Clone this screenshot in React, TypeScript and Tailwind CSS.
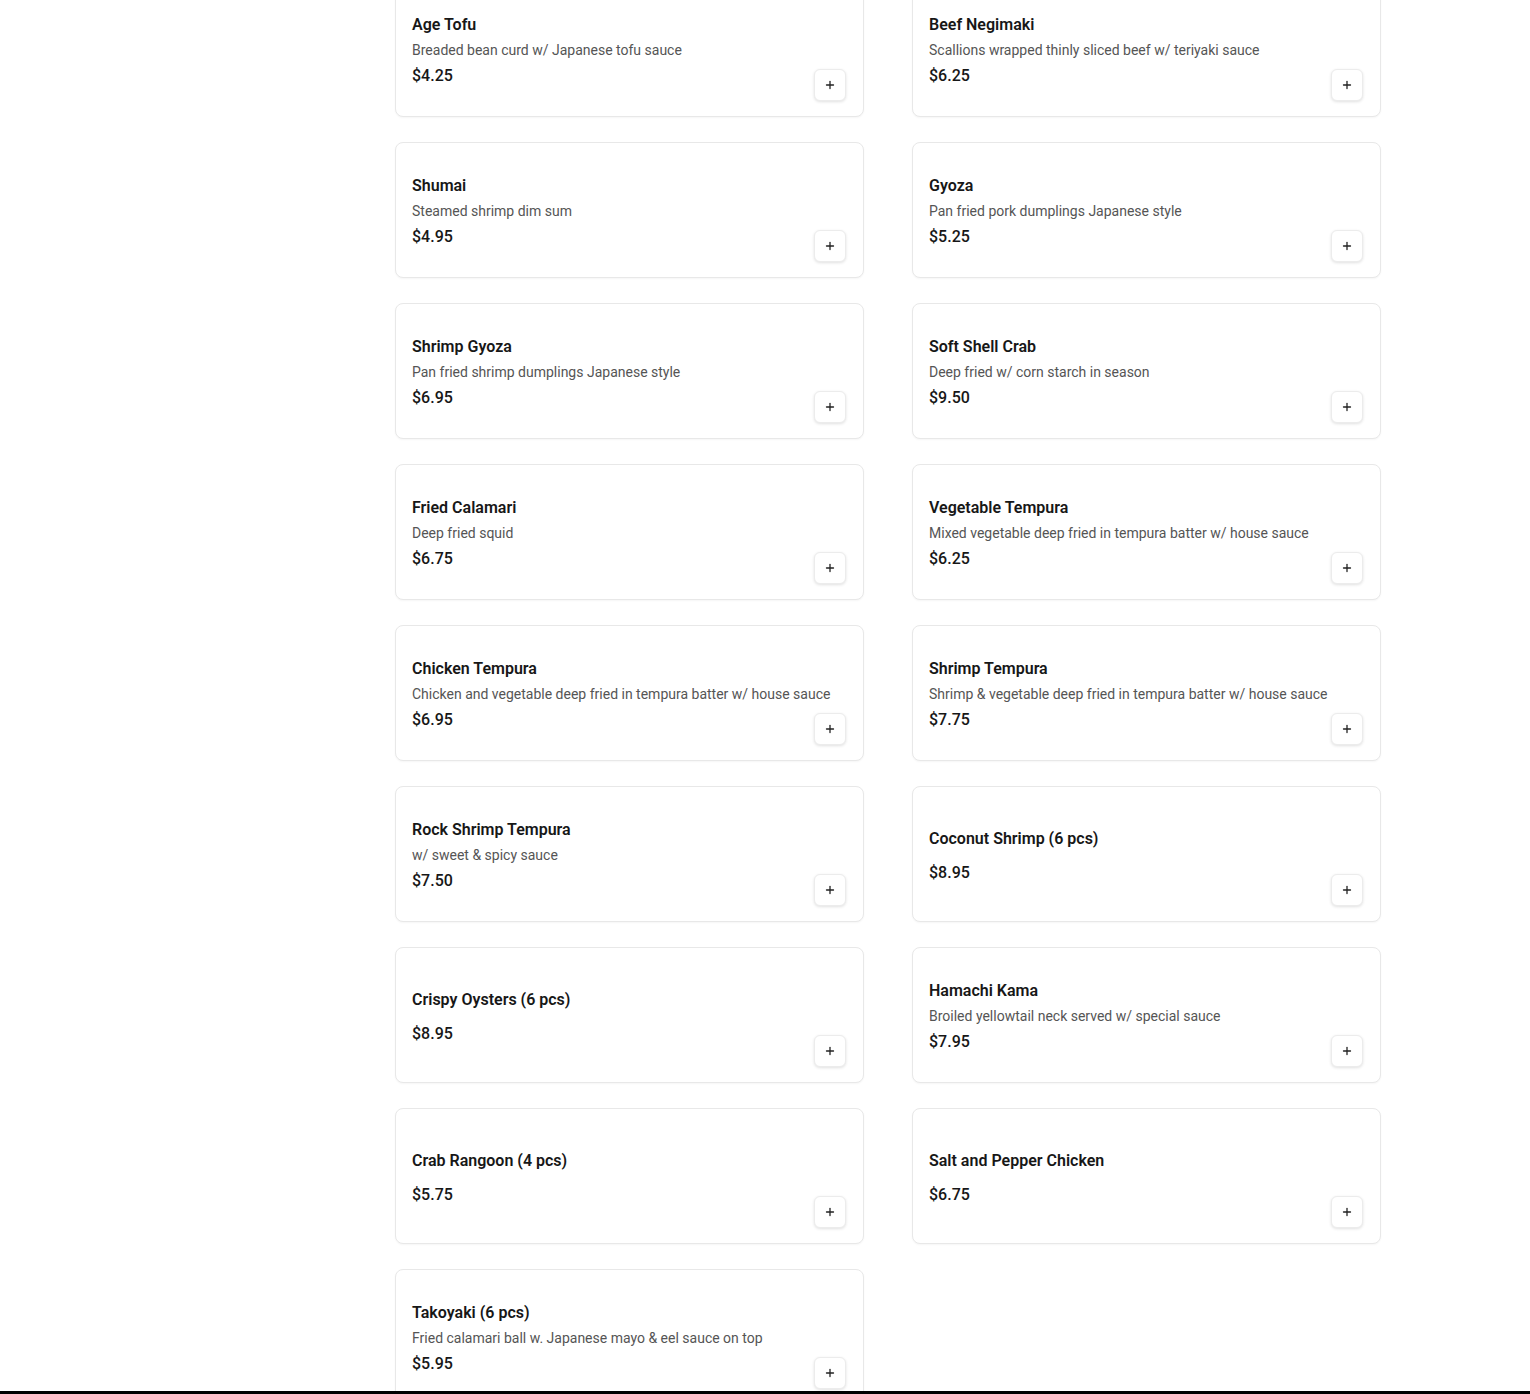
import { Plus } from "lucide-react";

type Item = { name: string; desc?: string; price: string };

const items: Item[] = [
  { name: "Age Tofu", desc: "Breaded bean curd w/ Japanese tofu sauce", price: "$4.25" },
  { name: "Beef Negimaki", desc: "Scallions wrapped thinly sliced beef w/ teriyaki sauce", price: "$6.25" },
  { name: "Shumai", desc: "Steamed shrimp dim sum", price: "$4.95" },
  { name: "Gyoza", desc: "Pan fried pork dumplings Japanese style", price: "$5.25" },
  { name: "Shrimp Gyoza", desc: "Pan fried shrimp dumplings Japanese style", price: "$6.95" },
  { name: "Soft Shell Crab", desc: "Deep fried w/ corn starch in season", price: "$9.50" },
  { name: "Fried Calamari", desc: "Deep fried squid", price: "$6.75" },
  { name: "Vegetable Tempura", desc: "Mixed vegetable deep fried in tempura batter w/ house sauce", price: "$6.25" },
  { name: "Chicken Tempura", desc: "Chicken and vegetable deep fried in tempura batter w/ house sauce", price: "$6.95" },
  { name: "Shrimp Tempura", desc: "Shrimp & vegetable deep fried in tempura batter w/ house sauce", price: "$7.75" },
  { name: "Rock Shrimp Tempura", desc: "w/ sweet & spicy sauce", price: "$7.50" },
  { name: "Coconut Shrimp (6 pcs)", price: "$8.95" },
  { name: "Crispy Oysters (6 pcs)", price: "$8.95" },
  { name: "Hamachi Kama", desc: "Broiled yellowtail neck served w/ special sauce", price: "$7.95" },
  { name: "Crab Rangoon (4 pcs)", price: "$5.75" },
  { name: "Salt and Pepper Chicken", price: "$6.75" },
  { name: "Takoyaki (6 pcs)", desc: "Fried calamari ball w. Japanese mayo & eel sauce on top", price: "$5.95" },
];

function MenuCard({ item }: { item: Item }) {
  return (
    <div className="relative h-[136px] rounded-lg border border-[#e8e8e8] bg-white px-4 flex items-center shadow-[0_1px_2px_rgba(0,0,0,0.04)]">
      <div className="flex-1 pt-[3px]">
        <div className="text-base leading-6 font-semibold text-[#171717]">{item.name}</div>
        {item.desc ? (
          <div className="mt-[3px] text-sm leading-5 text-[#555]">{item.desc}</div>
        ) : null}
        <div className={`${item.desc ? "mt-[4px]" : "mt-[10px]"} text-base leading-6 font-medium text-[#171717]`}>
          {item.price}
        </div>
      </div>
      {/* add button sits in the bottom-right corner over the text area */}
      <button className="absolute right-[17px] bottom-[15px] w-8 h-8 rounded-md border border-[#ececec] bg-white flex items-center justify-center shadow-[0_1px_3px_rgba(0,0,0,0.12)] text-[#222]">
        <Plus size={12} strokeWidth={2.6} />
      </button>
    </div>
  );
}

export default function App() {
  return (
    <div className="h-[1394px] overflow-hidden bg-white relative" style={{ fontFamily: "Roboto, 'Liberation Sans', sans-serif" }}>
      <div className="ml-[395px] w-[986px] -mt-[19px] grid grid-cols-2 gap-x-12 gap-y-[25px]">
        {items.map((it) => (
          <MenuCard key={it.name} item={it} />
        ))}
      </div>
      <div className="absolute left-0 right-0 bottom-0 h-[3px] bg-black" />
    </div>
  );
}
